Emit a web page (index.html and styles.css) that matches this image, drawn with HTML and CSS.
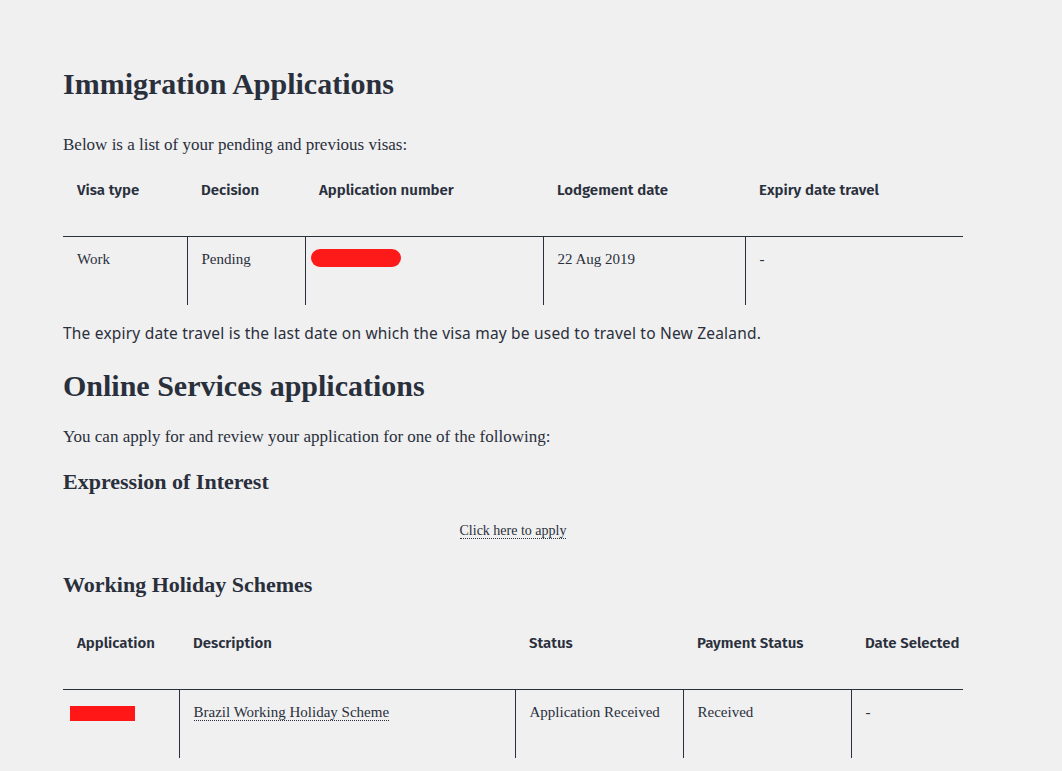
FILE: index.html
```html
<!DOCTYPE html>
<html lang="en">
<head>
    <meta charset="UTF-8">
    <title>Immigration Applications</title>
    <link rel="stylesheet" href="styles.css">
</head>
<body>
    <div class="container">
        <h1>Immigration Applications</h1>
        <p class="intro">Below is a list of your pending and previous visas:</p>

        <!-- Visa list -->
        <table class="data-table visas">
            <thead>
                <tr>
                    <th class="c1">Visa type</th>
                    <th class="c2">Decision</th>
                    <th class="c3">Application number</th>
                    <th class="c4">Lodgement date</th>
                    <th class="c5">Expiry date travel</th>
                </tr>
            </thead>
            <tbody>
                <tr>
                    <td>Work</td>
                    <td>Pending</td>
                    <td class="redact-cell"><span class="redact-blob"></span></td>
                    <td>22 Aug 2019</td>
                    <td>-</td>
                </tr>
            </tbody>
        </table>

        <p class="note">The expiry date travel is the last date on which the visa may be used to travel to New Zealand.</p>

        <h2>Online Services applications</h2>
        <p class="intro2">You can apply for and review your application for one of the following:</p>

        <h3 class="eoi">Expression of Interest</h3>
        <div class="apply-link"><a href="#">Click here to apply</a></div>

        <h3 class="whs">Working Holiday Schemes</h3>

        <table class="data-table schemes">
            <thead>
                <tr>
                    <th class="s1">Application</th>
                    <th class="s2">Description</th>
                    <th class="s3">Status</th>
                    <th class="s4">Payment Status</th>
                    <th class="s5">Date Selected</th>
                </tr>
            </thead>
            <tbody>
                <tr>
                    <td class="redact-cell"><span class="redact-bar"></span></td>
                    <td><a href="#">Brazil Working Holiday Scheme</a></td>
                    <td>Application Received</td>
                    <td>Received</td>
                    <td>-</td>
                </tr>
            </tbody>
        </table>
    </div>
</body>
</html>
```

FILE: styles.css
```css
body {
    margin: 0;
    padding: 0;
    background-color: #f0f0f0;
    color: #2a2f3c;
    font-family: "Liberation Serif", "Times New Roman", serif;
}
.container {
    width: 900px;
    padding: 66px 0 40px 63px;
}
h1, h2, h3, p {
    margin: 0;
}
h1 {
    font-size: 30px;
    line-height: 36px;
    font-weight: bold;
}
h2 {
    font-size: 30px;
    line-height: 36px;
    margin-top: 24px;
}
h3 {
    font-size: 22px;
    line-height: 28px;
}
.intro {
    font-size: 17px;
    line-height: 24px;
    margin-top: 31px;
}
.intro2 {
    font-size: 17px;
    line-height: 24px;
    margin-top: 21px;
}
.eoi {
    margin-top: 19px;
}
.whs {
    margin-top: 30px;
}
.note {
    font-family: "Noto Sans", "Open Sans", sans-serif;
    font-size: 15.5px;
    line-height: 22px;
    margin-top: 17px;
    letter-spacing: 0.2px;
}
.apply-link {
    text-align: center;
    font-size: 14px;
    line-height: 20px;
    margin-top: 25px;
}
a {
    color: #2a2f3c;
    text-decoration: none;
    border-bottom: 1px dotted #2a2f3c;
}

/* tables */
.data-table {
    width: 900px;
    border-collapse: collapse;
    table-layout: fixed;
}
.visas {
    margin-top: 10px;
}
.schemes {
    margin-top: 21px;
}
.data-table th {
    font-family: "Fira Sans", "Noto Sans", "Open Sans", sans-serif;
    font-weight: 600;
    font-size: 15px;
    line-height: 22px;
    text-align: left;
    vertical-align: top;
    height: 69px;
    padding: 12px 0 0 14px;
    box-sizing: border-box;
    border-bottom: 1px solid #2a2f3c;
    white-space: nowrap;
}
.data-table td {
    font-size: 15px;
    line-height: 22px;
    vertical-align: top;
    height: 69px;
    padding: 11px 0 0 14px;
    box-sizing: border-box;
}
.data-table td + td {
    border-left: 1px solid #2a2f3c;
}
.c1 { width: 124px; }
.c2 { width: 118px; }
.c3 { width: 238px; }
.c4 { width: 202px; }
.c5 { width: 218px; }
.s1 { width: 116px; }
.s2 { width: 336px; }
.s3 { width: 168px; }
.s4 { width: 168px; }
.s5 { width: 112px; }

.redact-cell {
    padding-left: 5px !important;
}
.redact-blob {
    display: block;
    width: 90px;
    height: 18px;
    margin-top: 1px;
    background-color: #ff1a1a;
    border-radius: 9px;
}
.redact-bar {
    display: block;
    width: 65px;
    height: 15px;
    margin: 5px 0 0 2px;
    background-color: #ff1717;
}
```
